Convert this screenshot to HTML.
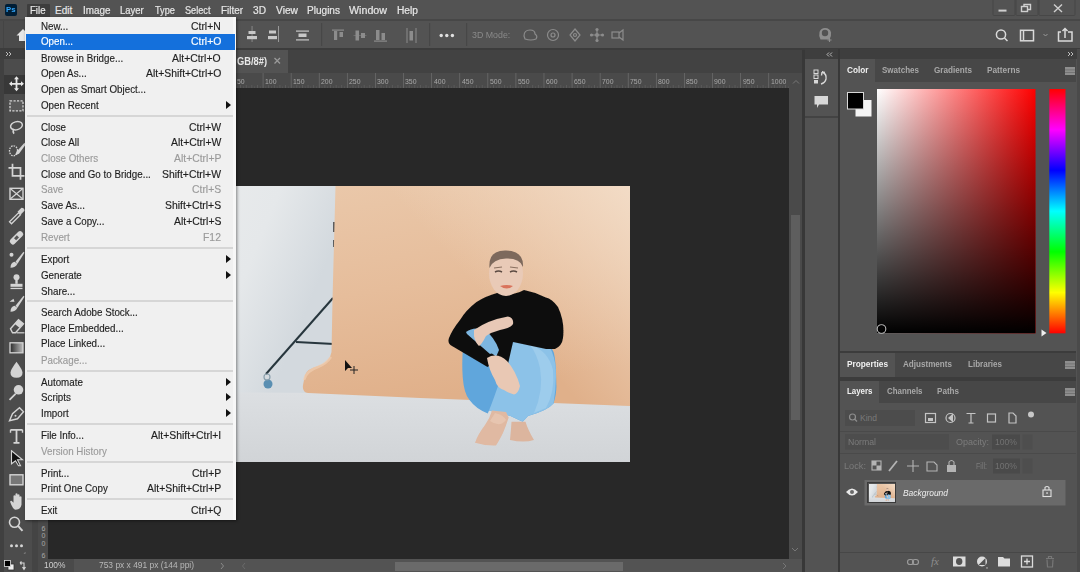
<!DOCTYPE html>
<html><head><meta charset="utf-8"><style>
html,body{margin:0;padding:0;}
body{width:1080px;height:572px;overflow:hidden;position:relative;background:#535353;font-family:"Liberation Sans", sans-serif;}
svg{position:absolute;overflow:visible;}
</style></head><body>
<div style="position:absolute;left:0px;top:0px;width:1080px;height:19px;background:#535353;"></div>
<div style="position:absolute;left:0px;top:19px;width:1080px;height:2px;background:#474747;"></div>
<div style="position:absolute;left:0px;top:21px;width:1080px;height:28px;background:#535353;"></div>
<div style="position:absolute;left:0px;top:48px;width:1080px;height:2px;background:#3c3c3c;"></div>
<div style="position:absolute;left:0px;top:50px;width:32px;height:9px;background:#3e3e3e;"></div>
<div style="position:absolute;left:0px;top:59px;width:32px;height:513px;background:#4c4c4c;"></div>
<div style="position:absolute;left:0px;top:59px;width:4px;height:513px;background:#404040;"></div>
<div style="position:absolute;left:32px;top:50px;width:6px;height:522px;background:#444444;"></div>
<div style="position:absolute;left:38px;top:50px;width:765px;height:23px;background:#424242;"></div>
<div style="position:absolute;left:38px;top:50px;width:250px;height:23px;background:#535353;"></div>
<div style="position:absolute;left:38px;top:73px;width:751px;height:15px;background:#4a4a4a;"></div>
<div style="position:absolute;left:38px;top:88px;width:10px;height:471px;background:#4a4a4a;"></div>
<div style="position:absolute;left:48px;top:88px;width:741px;height:471px;background:#282828;"></div>
<div style="position:absolute;left:789px;top:73px;width:13px;height:486px;background:#4a4a4a;"></div>
<div style="position:absolute;left:791px;top:215px;width:9px;height:205px;background:#5e5e5e;"></div>
<div style="position:absolute;left:38px;top:559px;width:765px;height:13px;background:#535353;"></div>
<div style="position:absolute;left:38px;top:559px;width:36px;height:13px;background:#4a4a4a;"></div>
<div style="position:absolute;left:395px;top:562px;width:228px;height:9px;background:#6a6a6a;"></div>
<div style="position:absolute;left:802px;top:50px;width:3px;height:522px;background:#383838;"></div>
<div style="position:absolute;left:805px;top:49px;width:33px;height:10px;background:#3e3e3e;"></div>
<div style="position:absolute;left:805px;top:59px;width:33px;height:513px;background:#535353;"></div>
<div style="position:absolute;left:805px;top:116px;width:33px;height:1.5px;background:#434343;"></div>
<div style="position:absolute;left:838px;top:49px;width:2px;height:523px;background:#383838;"></div>
<div style="position:absolute;left:840px;top:49px;width:240px;height:10px;background:#3e3e3e;"></div>
<div style="position:absolute;left:840px;top:59px;width:236px;height:23px;background:#474747;"></div>
<div style="position:absolute;left:840px;top:59px;width:35px;height:23px;background:#535353;"></div>
<div style="position:absolute;left:840px;top:82px;width:236px;height:269px;background:#535353;"></div>
<div style="position:absolute;left:840px;top:351px;width:236px;height:2px;background:#3c3c3c;"></div>
<div style="position:absolute;left:840px;top:353px;width:236px;height:24px;background:#474747;"></div>
<div style="position:absolute;left:840px;top:353px;width:55px;height:24px;background:#535353;"></div>
<div style="position:absolute;left:840px;top:377px;width:236px;height:4px;background:#3c3c3c;"></div>
<div style="position:absolute;left:840px;top:381px;width:236px;height:22px;background:#474747;"></div>
<div style="position:absolute;left:840px;top:381px;width:39px;height:22px;background:#535353;"></div>
<div style="position:absolute;left:840px;top:403px;width:236px;height:169px;background:#535353;"></div>
<div style="position:absolute;left:1077px;top:49px;width:3px;height:523px;background:#4a4a4a;"></div>
<svg style="left:0;top:0" width="1080" height="572" viewBox="0 0 1080 572"><rect x="206.50" y="73" width="0.8" height="15" fill="#6a6a6a"/><rect x="212.12" y="85" width="0.8" height="3" fill="#5e5e5e"/><rect x="217.74" y="85" width="0.8" height="3" fill="#5e5e5e"/><rect x="223.35" y="85" width="0.8" height="3" fill="#5e5e5e"/><rect x="228.97" y="85" width="0.8" height="3" fill="#5e5e5e"/><rect x="234.59" y="73" width="0.8" height="15" fill="#6a6a6a"/><rect x="240.21" y="85" width="0.8" height="3" fill="#5e5e5e"/><rect x="245.83" y="85" width="0.8" height="3" fill="#5e5e5e"/><rect x="251.44" y="85" width="0.8" height="3" fill="#5e5e5e"/><rect x="257.06" y="85" width="0.8" height="3" fill="#5e5e5e"/><rect x="262.68" y="73" width="0.8" height="15" fill="#6a6a6a"/><rect x="268.30" y="85" width="0.8" height="3" fill="#5e5e5e"/><rect x="273.92" y="85" width="0.8" height="3" fill="#5e5e5e"/><rect x="279.53" y="85" width="0.8" height="3" fill="#5e5e5e"/><rect x="285.15" y="85" width="0.8" height="3" fill="#5e5e5e"/><rect x="290.77" y="73" width="0.8" height="15" fill="#6a6a6a"/><rect x="296.39" y="85" width="0.8" height="3" fill="#5e5e5e"/><rect x="302.01" y="85" width="0.8" height="3" fill="#5e5e5e"/><rect x="307.62" y="85" width="0.8" height="3" fill="#5e5e5e"/><rect x="313.24" y="85" width="0.8" height="3" fill="#5e5e5e"/><rect x="318.86" y="73" width="0.8" height="15" fill="#6a6a6a"/><rect x="324.48" y="85" width="0.8" height="3" fill="#5e5e5e"/><rect x="330.10" y="85" width="0.8" height="3" fill="#5e5e5e"/><rect x="335.71" y="85" width="0.8" height="3" fill="#5e5e5e"/><rect x="341.33" y="85" width="0.8" height="3" fill="#5e5e5e"/><rect x="346.95" y="73" width="0.8" height="15" fill="#6a6a6a"/><rect x="352.57" y="85" width="0.8" height="3" fill="#5e5e5e"/><rect x="358.19" y="85" width="0.8" height="3" fill="#5e5e5e"/><rect x="363.80" y="85" width="0.8" height="3" fill="#5e5e5e"/><rect x="369.42" y="85" width="0.8" height="3" fill="#5e5e5e"/><rect x="375.04" y="73" width="0.8" height="15" fill="#6a6a6a"/><rect x="380.66" y="85" width="0.8" height="3" fill="#5e5e5e"/><rect x="386.28" y="85" width="0.8" height="3" fill="#5e5e5e"/><rect x="391.89" y="85" width="0.8" height="3" fill="#5e5e5e"/><rect x="397.51" y="85" width="0.8" height="3" fill="#5e5e5e"/><rect x="403.13" y="73" width="0.8" height="15" fill="#6a6a6a"/><rect x="408.75" y="85" width="0.8" height="3" fill="#5e5e5e"/><rect x="414.37" y="85" width="0.8" height="3" fill="#5e5e5e"/><rect x="419.98" y="85" width="0.8" height="3" fill="#5e5e5e"/><rect x="425.60" y="85" width="0.8" height="3" fill="#5e5e5e"/><rect x="431.22" y="73" width="0.8" height="15" fill="#6a6a6a"/><rect x="436.84" y="85" width="0.8" height="3" fill="#5e5e5e"/><rect x="442.46" y="85" width="0.8" height="3" fill="#5e5e5e"/><rect x="448.07" y="85" width="0.8" height="3" fill="#5e5e5e"/><rect x="453.69" y="85" width="0.8" height="3" fill="#5e5e5e"/><rect x="459.31" y="73" width="0.8" height="15" fill="#6a6a6a"/><rect x="464.93" y="85" width="0.8" height="3" fill="#5e5e5e"/><rect x="470.55" y="85" width="0.8" height="3" fill="#5e5e5e"/><rect x="476.16" y="85" width="0.8" height="3" fill="#5e5e5e"/><rect x="481.78" y="85" width="0.8" height="3" fill="#5e5e5e"/><rect x="487.40" y="73" width="0.8" height="15" fill="#6a6a6a"/><rect x="493.02" y="85" width="0.8" height="3" fill="#5e5e5e"/><rect x="498.64" y="85" width="0.8" height="3" fill="#5e5e5e"/><rect x="504.25" y="85" width="0.8" height="3" fill="#5e5e5e"/><rect x="509.87" y="85" width="0.8" height="3" fill="#5e5e5e"/><rect x="515.49" y="73" width="0.8" height="15" fill="#6a6a6a"/><rect x="521.11" y="85" width="0.8" height="3" fill="#5e5e5e"/><rect x="526.73" y="85" width="0.8" height="3" fill="#5e5e5e"/><rect x="532.34" y="85" width="0.8" height="3" fill="#5e5e5e"/><rect x="537.96" y="85" width="0.8" height="3" fill="#5e5e5e"/><rect x="543.58" y="73" width="0.8" height="15" fill="#6a6a6a"/><rect x="549.20" y="85" width="0.8" height="3" fill="#5e5e5e"/><rect x="554.82" y="85" width="0.8" height="3" fill="#5e5e5e"/><rect x="560.43" y="85" width="0.8" height="3" fill="#5e5e5e"/><rect x="566.05" y="85" width="0.8" height="3" fill="#5e5e5e"/><rect x="571.67" y="73" width="0.8" height="15" fill="#6a6a6a"/><rect x="577.29" y="85" width="0.8" height="3" fill="#5e5e5e"/><rect x="582.91" y="85" width="0.8" height="3" fill="#5e5e5e"/><rect x="588.52" y="85" width="0.8" height="3" fill="#5e5e5e"/><rect x="594.14" y="85" width="0.8" height="3" fill="#5e5e5e"/><rect x="599.76" y="73" width="0.8" height="15" fill="#6a6a6a"/><rect x="605.38" y="85" width="0.8" height="3" fill="#5e5e5e"/><rect x="611.00" y="85" width="0.8" height="3" fill="#5e5e5e"/><rect x="616.61" y="85" width="0.8" height="3" fill="#5e5e5e"/><rect x="622.23" y="85" width="0.8" height="3" fill="#5e5e5e"/><rect x="627.85" y="73" width="0.8" height="15" fill="#6a6a6a"/><rect x="633.47" y="85" width="0.8" height="3" fill="#5e5e5e"/><rect x="639.09" y="85" width="0.8" height="3" fill="#5e5e5e"/><rect x="644.70" y="85" width="0.8" height="3" fill="#5e5e5e"/><rect x="650.32" y="85" width="0.8" height="3" fill="#5e5e5e"/><rect x="655.94" y="73" width="0.8" height="15" fill="#6a6a6a"/><rect x="661.56" y="85" width="0.8" height="3" fill="#5e5e5e"/><rect x="667.18" y="85" width="0.8" height="3" fill="#5e5e5e"/><rect x="672.79" y="85" width="0.8" height="3" fill="#5e5e5e"/><rect x="678.41" y="85" width="0.8" height="3" fill="#5e5e5e"/><rect x="684.03" y="73" width="0.8" height="15" fill="#6a6a6a"/><rect x="689.65" y="85" width="0.8" height="3" fill="#5e5e5e"/><rect x="695.27" y="85" width="0.8" height="3" fill="#5e5e5e"/><rect x="700.88" y="85" width="0.8" height="3" fill="#5e5e5e"/><rect x="706.50" y="85" width="0.8" height="3" fill="#5e5e5e"/><rect x="712.12" y="73" width="0.8" height="15" fill="#6a6a6a"/><rect x="717.74" y="85" width="0.8" height="3" fill="#5e5e5e"/><rect x="723.36" y="85" width="0.8" height="3" fill="#5e5e5e"/><rect x="728.97" y="85" width="0.8" height="3" fill="#5e5e5e"/><rect x="734.59" y="85" width="0.8" height="3" fill="#5e5e5e"/><rect x="740.21" y="73" width="0.8" height="15" fill="#6a6a6a"/><rect x="745.83" y="85" width="0.8" height="3" fill="#5e5e5e"/><rect x="751.45" y="85" width="0.8" height="3" fill="#5e5e5e"/><rect x="757.06" y="85" width="0.8" height="3" fill="#5e5e5e"/><rect x="762.68" y="85" width="0.8" height="3" fill="#5e5e5e"/><rect x="768.30" y="73" width="0.8" height="15" fill="#6a6a6a"/><rect x="773.92" y="85" width="0.8" height="3" fill="#5e5e5e"/><rect x="779.54" y="85" width="0.8" height="3" fill="#5e5e5e"/><rect x="785.15" y="85" width="0.8" height="3" fill="#5e5e5e"/><rect x="52.00" y="86.3" width="0.7" height="1.7" fill="#5a5a5a"/><rect x="57.62" y="86.3" width="0.7" height="1.7" fill="#5a5a5a"/><rect x="63.24" y="86.3" width="0.7" height="1.7" fill="#5a5a5a"/><rect x="68.86" y="86.3" width="0.7" height="1.7" fill="#5a5a5a"/><rect x="74.48" y="86.3" width="0.7" height="1.7" fill="#5a5a5a"/><rect x="80.10" y="86.3" width="0.7" height="1.7" fill="#5a5a5a"/><rect x="85.71" y="86.3" width="0.7" height="1.7" fill="#5a5a5a"/><rect x="91.33" y="86.3" width="0.7" height="1.7" fill="#5a5a5a"/><rect x="96.95" y="86.3" width="0.7" height="1.7" fill="#5a5a5a"/><rect x="102.57" y="86.3" width="0.7" height="1.7" fill="#5a5a5a"/><rect x="108.19" y="86.3" width="0.7" height="1.7" fill="#5a5a5a"/><rect x="113.80" y="86.3" width="0.7" height="1.7" fill="#5a5a5a"/><rect x="119.42" y="86.3" width="0.7" height="1.7" fill="#5a5a5a"/><rect x="125.04" y="86.3" width="0.7" height="1.7" fill="#5a5a5a"/><rect x="130.66" y="86.3" width="0.7" height="1.7" fill="#5a5a5a"/><rect x="136.28" y="86.3" width="0.7" height="1.7" fill="#5a5a5a"/><rect x="141.89" y="86.3" width="0.7" height="1.7" fill="#5a5a5a"/><rect x="147.51" y="86.3" width="0.7" height="1.7" fill="#5a5a5a"/><rect x="153.13" y="86.3" width="0.7" height="1.7" fill="#5a5a5a"/><rect x="158.75" y="86.3" width="0.7" height="1.7" fill="#5a5a5a"/><rect x="164.37" y="86.3" width="0.7" height="1.7" fill="#5a5a5a"/><rect x="169.98" y="86.3" width="0.7" height="1.7" fill="#5a5a5a"/><rect x="175.60" y="86.3" width="0.7" height="1.7" fill="#5a5a5a"/><rect x="181.22" y="86.3" width="0.7" height="1.7" fill="#5a5a5a"/><rect x="186.84" y="86.3" width="0.7" height="1.7" fill="#5a5a5a"/><rect x="192.46" y="86.3" width="0.7" height="1.7" fill="#5a5a5a"/><rect x="198.07" y="86.3" width="0.7" height="1.7" fill="#5a5a5a"/><rect x="203.69" y="86.3" width="0.7" height="1.7" fill="#5a5a5a"/><rect x="209.31" y="86.3" width="0.7" height="1.7" fill="#5a5a5a"/><rect x="214.93" y="86.3" width="0.7" height="1.7" fill="#5a5a5a"/><rect x="220.54" y="86.3" width="0.7" height="1.7" fill="#5a5a5a"/><rect x="226.16" y="86.3" width="0.7" height="1.7" fill="#5a5a5a"/><rect x="231.78" y="86.3" width="0.7" height="1.7" fill="#5a5a5a"/><rect x="237.40" y="86.3" width="0.7" height="1.7" fill="#5a5a5a"/><rect x="243.02" y="86.3" width="0.7" height="1.7" fill="#5a5a5a"/><rect x="248.63" y="86.3" width="0.7" height="1.7" fill="#5a5a5a"/><rect x="254.25" y="86.3" width="0.7" height="1.7" fill="#5a5a5a"/><rect x="259.87" y="86.3" width="0.7" height="1.7" fill="#5a5a5a"/><rect x="265.49" y="86.3" width="0.7" height="1.7" fill="#5a5a5a"/><rect x="271.11" y="86.3" width="0.7" height="1.7" fill="#5a5a5a"/><rect x="276.73" y="86.3" width="0.7" height="1.7" fill="#5a5a5a"/><rect x="282.34" y="86.3" width="0.7" height="1.7" fill="#5a5a5a"/><rect x="287.96" y="86.3" width="0.7" height="1.7" fill="#5a5a5a"/><rect x="293.58" y="86.3" width="0.7" height="1.7" fill="#5a5a5a"/><rect x="299.20" y="86.3" width="0.7" height="1.7" fill="#5a5a5a"/><rect x="304.81" y="86.3" width="0.7" height="1.7" fill="#5a5a5a"/><rect x="310.43" y="86.3" width="0.7" height="1.7" fill="#5a5a5a"/><rect x="316.05" y="86.3" width="0.7" height="1.7" fill="#5a5a5a"/><rect x="321.67" y="86.3" width="0.7" height="1.7" fill="#5a5a5a"/><rect x="327.29" y="86.3" width="0.7" height="1.7" fill="#5a5a5a"/><rect x="332.90" y="86.3" width="0.7" height="1.7" fill="#5a5a5a"/><rect x="338.52" y="86.3" width="0.7" height="1.7" fill="#5a5a5a"/><rect x="344.14" y="86.3" width="0.7" height="1.7" fill="#5a5a5a"/><rect x="349.76" y="86.3" width="0.7" height="1.7" fill="#5a5a5a"/><rect x="355.38" y="86.3" width="0.7" height="1.7" fill="#5a5a5a"/><rect x="361.00" y="86.3" width="0.7" height="1.7" fill="#5a5a5a"/><rect x="366.61" y="86.3" width="0.7" height="1.7" fill="#5a5a5a"/><rect x="372.23" y="86.3" width="0.7" height="1.7" fill="#5a5a5a"/><rect x="377.85" y="86.3" width="0.7" height="1.7" fill="#5a5a5a"/><rect x="383.47" y="86.3" width="0.7" height="1.7" fill="#5a5a5a"/><rect x="389.08" y="86.3" width="0.7" height="1.7" fill="#5a5a5a"/><rect x="394.70" y="86.3" width="0.7" height="1.7" fill="#5a5a5a"/><rect x="400.32" y="86.3" width="0.7" height="1.7" fill="#5a5a5a"/><rect x="405.94" y="86.3" width="0.7" height="1.7" fill="#5a5a5a"/><rect x="411.56" y="86.3" width="0.7" height="1.7" fill="#5a5a5a"/><rect x="417.17" y="86.3" width="0.7" height="1.7" fill="#5a5a5a"/><rect x="422.79" y="86.3" width="0.7" height="1.7" fill="#5a5a5a"/><rect x="428.41" y="86.3" width="0.7" height="1.7" fill="#5a5a5a"/><rect x="434.03" y="86.3" width="0.7" height="1.7" fill="#5a5a5a"/><rect x="439.65" y="86.3" width="0.7" height="1.7" fill="#5a5a5a"/><rect x="445.26" y="86.3" width="0.7" height="1.7" fill="#5a5a5a"/><rect x="450.88" y="86.3" width="0.7" height="1.7" fill="#5a5a5a"/><rect x="456.50" y="86.3" width="0.7" height="1.7" fill="#5a5a5a"/><rect x="462.12" y="86.3" width="0.7" height="1.7" fill="#5a5a5a"/><rect x="467.74" y="86.3" width="0.7" height="1.7" fill="#5a5a5a"/><rect x="473.35" y="86.3" width="0.7" height="1.7" fill="#5a5a5a"/><rect x="478.97" y="86.3" width="0.7" height="1.7" fill="#5a5a5a"/><rect x="484.59" y="86.3" width="0.7" height="1.7" fill="#5a5a5a"/><rect x="490.21" y="86.3" width="0.7" height="1.7" fill="#5a5a5a"/><rect x="495.83" y="86.3" width="0.7" height="1.7" fill="#5a5a5a"/><rect x="501.44" y="86.3" width="0.7" height="1.7" fill="#5a5a5a"/><rect x="507.06" y="86.3" width="0.7" height="1.7" fill="#5a5a5a"/><rect x="512.68" y="86.3" width="0.7" height="1.7" fill="#5a5a5a"/><rect x="518.30" y="86.3" width="0.7" height="1.7" fill="#5a5a5a"/><rect x="523.92" y="86.3" width="0.7" height="1.7" fill="#5a5a5a"/><rect x="529.53" y="86.3" width="0.7" height="1.7" fill="#5a5a5a"/><rect x="535.15" y="86.3" width="0.7" height="1.7" fill="#5a5a5a"/><rect x="540.77" y="86.3" width="0.7" height="1.7" fill="#5a5a5a"/><rect x="546.39" y="86.3" width="0.7" height="1.7" fill="#5a5a5a"/><rect x="552.01" y="86.3" width="0.7" height="1.7" fill="#5a5a5a"/><rect x="557.62" y="86.3" width="0.7" height="1.7" fill="#5a5a5a"/><rect x="563.24" y="86.3" width="0.7" height="1.7" fill="#5a5a5a"/><rect x="568.86" y="86.3" width="0.7" height="1.7" fill="#5a5a5a"/><rect x="574.48" y="86.3" width="0.7" height="1.7" fill="#5a5a5a"/><rect x="580.10" y="86.3" width="0.7" height="1.7" fill="#5a5a5a"/><rect x="585.71" y="86.3" width="0.7" height="1.7" fill="#5a5a5a"/><rect x="591.33" y="86.3" width="0.7" height="1.7" fill="#5a5a5a"/><rect x="596.95" y="86.3" width="0.7" height="1.7" fill="#5a5a5a"/><rect x="602.57" y="86.3" width="0.7" height="1.7" fill="#5a5a5a"/><rect x="608.19" y="86.3" width="0.7" height="1.7" fill="#5a5a5a"/><rect x="613.80" y="86.3" width="0.7" height="1.7" fill="#5a5a5a"/><rect x="619.42" y="86.3" width="0.7" height="1.7" fill="#5a5a5a"/><rect x="625.04" y="86.3" width="0.7" height="1.7" fill="#5a5a5a"/><rect x="630.66" y="86.3" width="0.7" height="1.7" fill="#5a5a5a"/><rect x="636.28" y="86.3" width="0.7" height="1.7" fill="#5a5a5a"/><rect x="641.89" y="86.3" width="0.7" height="1.7" fill="#5a5a5a"/><rect x="647.51" y="86.3" width="0.7" height="1.7" fill="#5a5a5a"/><rect x="653.13" y="86.3" width="0.7" height="1.7" fill="#5a5a5a"/><rect x="658.75" y="86.3" width="0.7" height="1.7" fill="#5a5a5a"/><rect x="664.37" y="86.3" width="0.7" height="1.7" fill="#5a5a5a"/><rect x="669.98" y="86.3" width="0.7" height="1.7" fill="#5a5a5a"/><rect x="675.60" y="86.3" width="0.7" height="1.7" fill="#5a5a5a"/><rect x="681.22" y="86.3" width="0.7" height="1.7" fill="#5a5a5a"/><rect x="686.84" y="86.3" width="0.7" height="1.7" fill="#5a5a5a"/><rect x="692.46" y="86.3" width="0.7" height="1.7" fill="#5a5a5a"/><rect x="698.08" y="86.3" width="0.7" height="1.7" fill="#5a5a5a"/><rect x="703.69" y="86.3" width="0.7" height="1.7" fill="#5a5a5a"/><rect x="709.31" y="86.3" width="0.7" height="1.7" fill="#5a5a5a"/><rect x="714.93" y="86.3" width="0.7" height="1.7" fill="#5a5a5a"/><rect x="720.55" y="86.3" width="0.7" height="1.7" fill="#5a5a5a"/><rect x="726.16" y="86.3" width="0.7" height="1.7" fill="#5a5a5a"/><rect x="731.78" y="86.3" width="0.7" height="1.7" fill="#5a5a5a"/><rect x="737.40" y="86.3" width="0.7" height="1.7" fill="#5a5a5a"/><rect x="743.02" y="86.3" width="0.7" height="1.7" fill="#5a5a5a"/><rect x="748.64" y="86.3" width="0.7" height="1.7" fill="#5a5a5a"/><rect x="754.25" y="86.3" width="0.7" height="1.7" fill="#5a5a5a"/><rect x="759.87" y="86.3" width="0.7" height="1.7" fill="#5a5a5a"/><rect x="765.49" y="86.3" width="0.7" height="1.7" fill="#5a5a5a"/><rect x="771.11" y="86.3" width="0.7" height="1.7" fill="#5a5a5a"/><rect x="776.73" y="86.3" width="0.7" height="1.7" fill="#5a5a5a"/><rect x="782.34" y="86.3" width="0.7" height="1.7" fill="#5a5a5a"/><rect x="787.96" y="86.3" width="0.7" height="1.7" fill="#5a5a5a"/></svg>
<div style="position:absolute;left:236.89px;top:75.90px;height:11.2px;line-height:11.2px;font-size:8px;color:#a9a9a9;font-weight:normal;font-style:normal;white-space:pre;transform:scaleX(0.8600);transform-origin:0 0;">50</div>
<div style="position:absolute;left:264.98px;top:75.90px;height:11.2px;line-height:11.2px;font-size:8px;color:#a9a9a9;font-weight:normal;font-style:normal;white-space:pre;transform:scaleX(0.8600);transform-origin:0 0;">100</div>
<div style="position:absolute;left:293.07px;top:75.90px;height:11.2px;line-height:11.2px;font-size:8px;color:#a9a9a9;font-weight:normal;font-style:normal;white-space:pre;transform:scaleX(0.8600);transform-origin:0 0;">150</div>
<div style="position:absolute;left:321.16px;top:75.90px;height:11.2px;line-height:11.2px;font-size:8px;color:#a9a9a9;font-weight:normal;font-style:normal;white-space:pre;transform:scaleX(0.8600);transform-origin:0 0;">200</div>
<div style="position:absolute;left:349.25px;top:75.90px;height:11.2px;line-height:11.2px;font-size:8px;color:#a9a9a9;font-weight:normal;font-style:normal;white-space:pre;transform:scaleX(0.8600);transform-origin:0 0;">250</div>
<div style="position:absolute;left:377.34px;top:75.90px;height:11.2px;line-height:11.2px;font-size:8px;color:#a9a9a9;font-weight:normal;font-style:normal;white-space:pre;transform:scaleX(0.8600);transform-origin:0 0;">300</div>
<div style="position:absolute;left:405.43px;top:75.90px;height:11.2px;line-height:11.2px;font-size:8px;color:#a9a9a9;font-weight:normal;font-style:normal;white-space:pre;transform:scaleX(0.8600);transform-origin:0 0;">350</div>
<div style="position:absolute;left:433.52px;top:75.90px;height:11.2px;line-height:11.2px;font-size:8px;color:#a9a9a9;font-weight:normal;font-style:normal;white-space:pre;transform:scaleX(0.8600);transform-origin:0 0;">400</div>
<div style="position:absolute;left:461.61px;top:75.90px;height:11.2px;line-height:11.2px;font-size:8px;color:#a9a9a9;font-weight:normal;font-style:normal;white-space:pre;transform:scaleX(0.8600);transform-origin:0 0;">450</div>
<div style="position:absolute;left:489.70px;top:75.90px;height:11.2px;line-height:11.2px;font-size:8px;color:#a9a9a9;font-weight:normal;font-style:normal;white-space:pre;transform:scaleX(0.8600);transform-origin:0 0;">500</div>
<div style="position:absolute;left:517.79px;top:75.90px;height:11.2px;line-height:11.2px;font-size:8px;color:#a9a9a9;font-weight:normal;font-style:normal;white-space:pre;transform:scaleX(0.8600);transform-origin:0 0;">550</div>
<div style="position:absolute;left:545.88px;top:75.90px;height:11.2px;line-height:11.2px;font-size:8px;color:#a9a9a9;font-weight:normal;font-style:normal;white-space:pre;transform:scaleX(0.8600);transform-origin:0 0;">600</div>
<div style="position:absolute;left:573.97px;top:75.90px;height:11.2px;line-height:11.2px;font-size:8px;color:#a9a9a9;font-weight:normal;font-style:normal;white-space:pre;transform:scaleX(0.8600);transform-origin:0 0;">650</div>
<div style="position:absolute;left:602.06px;top:75.90px;height:11.2px;line-height:11.2px;font-size:8px;color:#a9a9a9;font-weight:normal;font-style:normal;white-space:pre;transform:scaleX(0.8600);transform-origin:0 0;">700</div>
<div style="position:absolute;left:630.15px;top:75.90px;height:11.2px;line-height:11.2px;font-size:8px;color:#a9a9a9;font-weight:normal;font-style:normal;white-space:pre;transform:scaleX(0.8600);transform-origin:0 0;">750</div>
<div style="position:absolute;left:658.24px;top:75.90px;height:11.2px;line-height:11.2px;font-size:8px;color:#a9a9a9;font-weight:normal;font-style:normal;white-space:pre;transform:scaleX(0.8600);transform-origin:0 0;">800</div>
<div style="position:absolute;left:686.33px;top:75.90px;height:11.2px;line-height:11.2px;font-size:8px;color:#a9a9a9;font-weight:normal;font-style:normal;white-space:pre;transform:scaleX(0.8600);transform-origin:0 0;">850</div>
<div style="position:absolute;left:714.42px;top:75.90px;height:11.2px;line-height:11.2px;font-size:8px;color:#a9a9a9;font-weight:normal;font-style:normal;white-space:pre;transform:scaleX(0.8600);transform-origin:0 0;">900</div>
<div style="position:absolute;left:742.51px;top:75.90px;height:11.2px;line-height:11.2px;font-size:8px;color:#a9a9a9;font-weight:normal;font-style:normal;white-space:pre;transform:scaleX(0.8600);transform-origin:0 0;">950</div>
<div style="position:absolute;left:770.60px;top:75.90px;height:11.2px;line-height:11.2px;font-size:8px;color:#a9a9a9;font-weight:normal;font-style:normal;white-space:pre;transform:scaleX(0.8600);transform-origin:0 0;">1000</div>
<div style="position:absolute;left:41.50px;top:523.60px;height:9.8px;line-height:9.8px;font-size:7px;color:#a8a8a8;font-weight:normal;font-style:normal;white-space:pre;">6</div>
<div style="position:absolute;left:41.50px;top:531.10px;height:9.8px;line-height:9.8px;font-size:7px;color:#a8a8a8;font-weight:normal;font-style:normal;white-space:pre;">0</div>
<div style="position:absolute;left:41.50px;top:538.60px;height:9.8px;line-height:9.8px;font-size:7px;color:#a8a8a8;font-weight:normal;font-style:normal;white-space:pre;">0</div>
<div style="position:absolute;left:41.50px;top:551.10px;height:9.8px;line-height:9.8px;font-size:7px;color:#a8a8a8;font-weight:normal;font-style:normal;white-space:pre;">6</div>
<div style="position:absolute;left:236.50px;top:55.00px;height:14.0px;line-height:14.0px;font-size:10px;color:#e8e8e8;font-weight:bold;font-style:normal;white-space:pre;transform:scaleX(0.9307);transform-origin:0 0;">GB/8#)</div>
<svg style="left:0;top:0" width="1080" height="100"><path d="M274.5 58 L280 63.5 M280 58 L274.5 63.5" stroke="#9a9a9a" stroke-width="1.3"/></svg>
<div style="position:absolute;left:43.80px;top:560.05px;height:11.9px;line-height:11.9px;font-size:8.5px;color:#cfcfcf;font-weight:normal;font-style:normal;white-space:pre;transform:scaleX(0.9885);transform-origin:0 0;">100%</div>
<div style="position:absolute;left:99.00px;top:560.05px;height:11.9px;line-height:11.9px;font-size:8.5px;color:#b8b8b8;font-weight:normal;font-style:normal;white-space:pre;transform:scaleX(0.9902);transform-origin:0 0;">753 px x 491 px (144 ppi)</div>
<svg style="left:0;top:0" width="1080" height="572"><path d="M221 563 L223.5 566 L221 569" stroke="#8a8a8a" stroke-width="1" fill="none"/><path d="M245 563 L242.5 566 L245 569" stroke="#6a6a6a" stroke-width="1" fill="none"/><path d="M792 548 L795 551 L798 548" stroke="#777" stroke-width="1" fill="none"/><path d="M793 83.5 L796 80.5 L799 83.5" stroke="#777" stroke-width="1" fill="none"/><path d="M783 563 L786 566 L783 569" stroke="#777" stroke-width="1" fill="none"/></svg>

<svg style="left:206px;top:186px" width="424" height="276" viewBox="206 186 424 276">
<defs>
 <linearGradient id="wall" gradientUnits="userSpaceOnUse" x1="206" y1="186" x2="336" y2="240">
  <stop offset="0" stop-color="#e9ebec"/><stop offset="0.5" stop-color="#e5e8ea"/><stop offset="1" stop-color="#d3d9de"/>
 </linearGradient>
 <linearGradient id="floor" x1="0" y1="0" x2="0" y2="1">
  <stop offset="0" stop-color="#dcdfe2"/><stop offset="1" stop-color="#d1d4d7"/>
 </linearGradient>
 <linearGradient id="paper" x1="0" y1="0" x2="0.25" y2="1">
  <stop offset="0" stop-color="#eac8aa"/><stop offset="0.5" stop-color="#e6bd9b"/><stop offset="1" stop-color="#e0b08a"/>
 </linearGradient>
 <linearGradient id="paperTR" x1="0" y1="0.6" x2="1" y2="0">
  <stop offset="0.45" stop-color="#f2dac4" stop-opacity="0"/><stop offset="1" stop-color="#f3ddc8" stop-opacity="0.95"/>
 </linearGradient>
 <linearGradient id="jeans" x1="0" y1="0" x2="1" y2="1">
  <stop offset="0" stop-color="#6caee2"/><stop offset="0.55" stop-color="#88c2ea"/><stop offset="1" stop-color="#64a6dc"/>
 </linearGradient>
 <filter id="bl" x="-10%" y="-10%" width="120%" height="120%"><feGaussianBlur stdDeviation="0.5"/></filter>
</defs>
<rect x="206" y="186" width="424" height="276" fill="url(#wall)"/>
<path d="M206 392 L320 393 L630 404 L630 462 L206 462 Z" fill="url(#floor)"/>
<!-- stand -->
<g stroke="#27363d" stroke-width="2" fill="none">
 <path d="M266 374 L333 298"/>
 <path d="M296 342 L334 344"/>
</g>
<path d="M334 222 L334 232 M334 240 L334 247" stroke="#333" stroke-width="1.5"/>
<circle cx="268" cy="384" r="4.5" fill="#5a8fb2"/>
<circle cx="267" cy="377" r="3" fill="none" stroke="#8aa0ad" stroke-width="1.2"/>
<!-- backdrop paper -->
<path d="M335.5 186 L630 186 L630 406 L420 398 L308 393 Q302 392 303 385 L305 375 Q307 369 318 366 Q330 362 331.5 352 L332.5 300 Z" fill="url(#paper)"/>
<path d="M335.5 186 L630 186 L630 406 L420 398 L308 393 Q302 392 303 385 L305 375 Q307 369 318 366 Q330 362 331.5 352 L332.5 300 Z" fill="url(#paperTR)"/>
<path d="M304 380 Q306 371 318 367 Q326 364 331 357" stroke="#efcdb0" stroke-width="2.5" fill="none" opacity="0.7"/>
<!-- woman -->
<g filter="url(#bl)">
 <!-- jeans -->
 <path d="M466 331 Q461 350 462.7 377 Q464 394 469.5 400 Q476 409 487.8 413.4 L489 410.6 L510.5 416 L522.7 421.7 L528 416 Q547 411 553.5 403.6 Q557 392 556.3 384 Q556 360 553.6 352 Q551 346 546.8 343 Q530 336 515 338.6 L497 335 Z" fill="#60a6dc"/>
 <path d="M515 338.6 Q532 337 546.8 343 Q553 350 555.5 365 Q557 385 553.5 403.6 Q547 411 528 416 L522.7 421.7 L510.5 416 L489 410.6 Q494 398 500 380 Q506 360 515 338.6 Z" fill="#8cc2e8"/>
 <path d="M530 345 Q548 350 553 370 Q555 392 546 408 L534 413 Q544 390 540 368 Q537 354 530 345 Z" fill="#a9d2ef" opacity="0.6"/>
 <!-- sweater -->
 <path d="M497 293 Q486 296 476.5 302 Q466 310 460 320 Q452 330 449 338 Q447 343 452 346 L487.5 367 Q494 364 494 356 L498 356 L508 364 L513 342 L546 349 L555 349 Q562 346 563 338 Q565 322 558 307 Q552 299 545.8 297.6 Q535 292 524 290 Q511 297 497 293 Z" fill="#111"/>
 <!-- left knee between arm and torso -->
 <path d="M466 332 Q474 326 484 330 Q494 336 499 350 L496 357 Q492 352 490 354 L467 334 Z" fill="#7db6e0"/>
 <!-- hand on arm -->
 <path d="M474 330 Q488 320 508 316.5 Q514 318 513 324 Q511 328 500 330 Q492 332 486 336 Q482 344 479 346 Q475 342 474 336 Z" fill="#e8c8b6"/>
 <!-- hand on knee -->
 <path d="M487 358 Q497 352 507 361 Q516 371 520 386 Q518 394 514 394.5 Q508 393 504 390 Q497 388 495 380 Q489 370 487 358 Z" fill="#e9c8b4"/>
 <!-- head -->
 <ellipse cx="506" cy="273.5" rx="17" ry="22.5" fill="#e9cab7"/>
 <path d="M489.5 268 Q488 250 506 250.5 Q524 251 523 267 Q520 258 506 258.5 Q493 259 489.5 268 Z" fill="#7d695c"/>
 <path d="M500 286 Q507 284 513 286 Q507 291 500 286 Z" fill="#d9735c"/>
 <path d="M495 272 Q498.5 270 502 272 M510 272 Q513.5 270 517 272" stroke="#5a4a42" stroke-width="1.5" fill="none"/><path d="M494 268 L502 267 M510 267 L518 268" stroke="#8a7060" stroke-width="1.2"/>
 <!-- feet -->
 <path d="M492 410.6 L506 412 L508.7 417.6 Q506 426 503 433 Q499 441 496 445.5 Q486 446 475 442.7 Q478 434 485 425 Q490 418 492 410.6 Z" fill="#e0b9a2"/>
 <path d="M511.5 421.7 L525.5 421.7 Q528 430 534 440 Q524 443 510 440 Q511 430 511.5 421.7 Z" fill="#dcb59e"/>
 <path d="M495 413 Q504 415 506 420 Q500 428 490 421 Z" fill="#ebcdb9" opacity="0.6"/>
</g>
<!-- cursor -->
<path d="M345 360 L345 371 L348 368 L352 368 Z" fill="#111"/>
<path d="M354 366 L354 374 M350 370 L358 370" stroke="#222" stroke-width="1"/>
</svg>

<svg style="left:0;top:0" width="1080" height="572" viewBox="0 0 1080 572"><g fill="none" stroke="#bdbdbd" stroke-width="1"><path d="M829 52.5 L827 54.5 L829 56.5 M832 52.5 L830 54.5 L832 56.5"/><path d="M1068 52 L1070 54 L1068 56 M1071 52 L1073 54 L1071 56"/><path d="M6 52 L8 54 L6 56 M9 52 L11 54 L9 56"/></g><g fill="#d8d8d8"><rect x="814" y="70" width="4" height="3.5" fill="none" stroke="#d8d8d8" stroke-width="1"/><rect x="814" y="75" width="4" height="3.5" fill="none" stroke="#d8d8d8" stroke-width="1"/><rect x="814" y="80" width="4" height="3.5"/></g><path d="M822 72 Q827 74 826 79 Q825 83 821 84 M822 72 L821.5 75.5 M822 72 L825 72.5" fill="none" stroke="#d8d8d8" stroke-width="1.4"/><path d="M814.5 96 L828 96 L828 104.5 L819 104.5 L817 108 L817 104.5 L814.5 104.5 Z" fill="#d8d8d8"/><rect x="855.5" y="100" width="16" height="16.5" fill="#f4f4f4"/><rect x="847.5" y="92.5" width="16" height="16.5" fill="#000" stroke="#d8d8d8" stroke-width="1"/><defs><linearGradient id="sat" x1="0" x2="1"><stop offset="0" stop-color="#fff"/><stop offset="1" stop-color="#f00"/></linearGradient><linearGradient id="val" x1="0" y1="0" x2="0" y2="1"><stop offset="0" stop-color="#000" stop-opacity="0"/><stop offset="1" stop-color="#000"/></linearGradient><linearGradient id="hue" x1="0" y1="1" x2="0" y2="0"><stop offset="0" stop-color="#f00"/><stop offset="0.1667" stop-color="#ff0"/><stop offset="0.3333" stop-color="#0f0"/><stop offset="0.5" stop-color="#0ff"/><stop offset="0.6667" stop-color="#00f"/><stop offset="0.8333" stop-color="#f0f"/><stop offset="1" stop-color="#f00"/></linearGradient></defs><rect x="877" y="89" width="158.5" height="244.3" fill="url(#sat)"/><rect x="877" y="89" width="158.5" height="244.3" fill="url(#val)"/><rect x="1049.3" y="89" width="16.2" height="244.3" fill="url(#hue)"/><circle cx="881.5" cy="329" r="4.3" fill="none" stroke="#bbb" stroke-width="1.1"/><circle cx="881.5" cy="329" r="3.2" fill="none" stroke="#000" stroke-width="0.8"/><path d="M1041.5 329.5 L1041.5 336.5 L1046.5 333 Z" fill="#f0f0f0"/><rect x="1065" y="67" width="10" height="8" fill="#8e8e8e"/><g fill="#6e6e6e"><rect x="1065" y="69.5" width="10" height="0.8"/><rect x="1065" y="72.2" width="10" height="0.8"/></g><rect x="1065" y="361" width="10" height="8" fill="#8e8e8e"/><g fill="#6e6e6e"><rect x="1065" y="363.5" width="10" height="0.8"/><rect x="1065" y="366.2" width="10" height="0.8"/></g><rect x="1065" y="388" width="10" height="8" fill="#8e8e8e"/><g fill="#6e6e6e"><rect x="1065" y="390.5" width="10" height="0.8"/><rect x="1065" y="393.2" width="10" height="0.8"/></g><rect x="845" y="410" width="70" height="16" fill="#4c4c4c"/><g fill="none" stroke="#8e8e8e" stroke-width="1.2"><circle cx="852.5" cy="417" r="3"/><path d="M854.5 419 L857 421.5"/></g><g fill="none" stroke="#c4c4c4" stroke-width="1.2"><rect x="925.5" y="413.5" width="10" height="9"/><circle cx="950.5" cy="418" r="4.5"/><path d="M966.5 413.5 L975.5 413.5 M971 413.5 L971 423 M968.5 423 L973.5 423"/><rect x="987.5" y="414" width="8" height="8"/><path d="M1009 413 L1013 413 L1016 416 L1016 423 L1009 423 Z"/></g><circle cx="1031" cy="414.5" r="3" fill="#c8c8c8"/><path d="M948 418 L953 413.5 L953 422.5 Z" fill="#c4c4c4"/><rect x="928" y="418" width="5" height="3" fill="#c4c4c4"/><rect x="840" y="431" width="236" height="1" fill="#4a4a4a"/><rect x="840" y="453" width="236" height="1" fill="#4a4a4a"/><rect x="845" y="434" width="104" height="15.5" fill="#4d4d4d"/><rect x="992" y="434.5" width="28" height="15" fill="#4a4a4a"/><rect x="1022.5" y="434.5" width="10" height="15" fill="#4e4e4e"/><rect x="993" y="458.5" width="27" height="15" fill="#4a4a4a"/><rect x="1022.5" y="458.5" width="10" height="15" fill="#4e4e4e"/><g fill="none" stroke="#b4b4b4" stroke-width="1.1"><rect x="872" y="461" width="9" height="9"/><path d="M889 471 L897 461" stroke-width="1.8"/><path d="M913 460 L913 472 M907 466 L919 466"/><path d="M927 462 L934 462 L937 465 L937 471 L927 471 Z"/><path d="M949 465 L949 462 Q951.5 459 954 462 L954 465"/></g><rect x="947" y="465" width="9" height="7" fill="#b4b4b4"/><g fill="#b4b4b4"><rect x="872" y="461" width="4.5" height="4.5"/><rect x="876.5" y="465.5" width="4.5" height="4.5"/></g><rect x="864.5" y="480" width="201" height="25.5" fill="#6a6a6a"/><path d="M846 492 Q852 485 858 492 Q852 499 846 492 Z" fill="#e8e8e8"/><circle cx="852" cy="492" r="2" fill="#6a6a6a"/><rect x="867.5" y="482.5" width="28" height="20" fill="#555" stroke="#3a3a3a" stroke-width="1"/><g fill="none" stroke="#e0e0e0" stroke-width="1.1"><rect x="1043" y="490" width="8" height="6.5"/><path d="M1045 490 L1045 487.5 Q1047 485.5 1049 487.5 L1049 490"/></g><rect x="1046.3" y="492.3" width="1.5" height="1.5" fill="#e0e0e0"/><rect x="840" y="552" width="236" height="1" fill="#474747"/><g fill="none" stroke="#9a9a9a" stroke-width="1.2"><rect x="907.5" y="559.5" width="6" height="5" rx="2.5"/><rect x="912.5" y="559.5" width="6" height="5" rx="2.5"/></g><g fill="#dcdcdc"><rect x="953" y="556.5" width="12.5" height="10"/></g><ellipse cx="959.2" cy="561.5" rx="3.2" ry="3.4" fill="#535353"/><circle cx="982" cy="561.5" r="5" fill="#dcdcdc"/><path d="M978.5 565 L985.5 558 L985.5 565 Z" fill="#535353"/><path d="M986 567.5 L988 567.5 L987 569 Z" fill="#ccc"/><path d="M998 557 L1003 557 L1004.5 558.5 L1010 558.5 L1010 566.5 L998 566.5 Z" fill="#dcdcdc"/><rect x="1021.5" y="556" width="11" height="11" fill="none" stroke="#dcdcdc" stroke-width="1.3"/><path d="M1027 558.5 L1027 564.5 M1024 561.5 L1030 561.5" stroke="#dcdcdc" stroke-width="1.3"/><path d="M1046 558.5 L1054 558.5 M1048.5 558.5 L1048.5 556.5 L1051.5 556.5 L1051.5 558.5 M1047 559.5 L1047.5 567 L1052.5 567 L1053 559.5" fill="none" stroke="#777" stroke-width="1.2"/></svg>
<svg style="left:868.5px;top:483.5px" width="26" height="18" viewBox="206 186 424 276" preserveAspectRatio="none">
<rect x="206" y="186" width="424" height="276" fill="url(#wall)"/>
<path d="M206 392 L320 393 L630 404 L630 462 L206 462 Z" fill="url(#floor)"/>
<!-- stand -->
<g stroke="#27363d" stroke-width="2" fill="none">
 <path d="M266 374 L333 298"/>
 <path d="M296 342 L334 344"/>
</g>
<path d="M334 222 L334 232 M334 240 L334 247" stroke="#333" stroke-width="1.5"/>
<circle cx="268" cy="384" r="4.5" fill="#5a8fb2"/>
<circle cx="267" cy="377" r="3" fill="none" stroke="#8aa0ad" stroke-width="1.2"/>
<!-- backdrop paper -->
<path d="M335.5 186 L630 186 L630 406 L420 398 L308 393 Q302 392 303 385 L305 375 Q307 369 318 366 Q330 362 331.5 352 L332.5 300 Z" fill="url(#paper)"/>
<path d="M335.5 186 L630 186 L630 406 L420 398 L308 393 Q302 392 303 385 L305 375 Q307 369 318 366 Q330 362 331.5 352 L332.5 300 Z" fill="url(#paperTR)"/>
<path d="M304 380 Q306 371 318 367 Q326 364 331 357" stroke="#efcdb0" stroke-width="2.5" fill="none" opacity="0.7"/>
<!-- woman -->
<g >
 <!-- jeans -->
 <path d="M466 331 Q461 350 462.7 377 Q464 394 469.5 400 Q476 409 487.8 413.4 L489 410.6 L510.5 416 L522.7 421.7 L528 416 Q547 411 553.5 403.6 Q557 392 556.3 384 Q556 360 553.6 352 Q551 346 546.8 343 Q530 336 515 338.6 L497 335 Z" fill="#60a6dc"/>
 <path d="M515 338.6 Q532 337 546.8 343 Q553 350 555.5 365 Q557 385 553.5 403.6 Q547 411 528 416 L522.7 421.7 L510.5 416 L489 410.6 Q494 398 500 380 Q506 360 515 338.6 Z" fill="#8cc2e8"/>
 <path d="M530 345 Q548 350 553 370 Q555 392 546 408 L534 413 Q544 390 540 368 Q537 354 530 345 Z" fill="#a9d2ef" opacity="0.6"/>
 <!-- sweater -->
 <path d="M497 293 Q486 296 476.5 302 Q466 310 460 320 Q452 330 449 338 Q447 343 452 346 L487.5 367 Q494 364 494 356 L498 356 L508 364 L513 342 L546 349 L555 349 Q562 346 563 338 Q565 322 558 307 Q552 299 545.8 297.6 Q535 292 524 290 Q511 297 497 293 Z" fill="#111"/>
 <!-- left knee between arm and torso -->
 <path d="M466 332 Q474 326 484 330 Q494 336 499 350 L496 357 Q492 352 490 354 L467 334 Z" fill="#7db6e0"/>
 <!-- hand on arm -->
 <path d="M474 330 Q488 320 508 316.5 Q514 318 513 324 Q511 328 500 330 Q492 332 486 336 Q482 344 479 346 Q475 342 474 336 Z" fill="#e8c8b6"/>
 <!-- hand on knee -->
 <path d="M487 358 Q497 352 507 361 Q516 371 520 386 Q518 394 514 394.5 Q508 393 504 390 Q497 388 495 380 Q489 370 487 358 Z" fill="#e9c8b4"/>
 <!-- head -->
 <ellipse cx="506" cy="273.5" rx="17" ry="22.5" fill="#e9cab7"/>
 <path d="M489.5 268 Q488 250 506 250.5 Q524 251 523 267 Q520 258 506 258.5 Q493 259 489.5 268 Z" fill="#7d695c"/>
 <path d="M500 286 Q507 284 513 286 Q507 291 500 286 Z" fill="#d9735c"/>
 <path d="M495 272 Q498.5 270 502 272 M510 272 Q513.5 270 517 272" stroke="#5a4a42" stroke-width="1.5" fill="none"/><path d="M494 268 L502 267 M510 267 L518 268" stroke="#8a7060" stroke-width="1.2"/>
 <!-- feet -->
 <path d="M492 410.6 L506 412 L508.7 417.6 Q506 426 503 433 Q499 441 496 445.5 Q486 446 475 442.7 Q478 434 485 425 Q490 418 492 410.6 Z" fill="#e0b9a2"/>
 <path d="M511.5 421.7 L525.5 421.7 Q528 430 534 440 Q524 443 510 440 Q511 430 511.5 421.7 Z" fill="#dcb59e"/>
 <path d="M495 413 Q504 415 506 420 Q500 428 490 421 Z" fill="#ebcdb9" opacity="0.6"/>
</g>
<!-- cursor -->
<path d="M345 360 L345 371 L348 368 L352 368 Z" fill="#111"/>
<path d="M354 366 L354 374 M350 370 L358 370" stroke="#222" stroke-width="1"/>
</svg>
<div style="position:absolute;left:847.00px;top:64.20px;height:12.6px;line-height:12.6px;font-size:9px;color:#f0f0f0;font-weight:bold;font-style:normal;white-space:pre;transform:scaleX(0.9149);transform-origin:0 0;">Color</div>
<div style="position:absolute;left:882.00px;top:64.20px;height:12.6px;line-height:12.6px;font-size:9px;color:#a8a8a8;font-weight:bold;font-style:normal;white-space:pre;transform:scaleX(0.8909);transform-origin:0 0;">Swatches</div>
<div style="position:absolute;left:934.00px;top:64.20px;height:12.6px;line-height:12.6px;font-size:9px;color:#a8a8a8;font-weight:bold;font-style:normal;white-space:pre;transform:scaleX(0.9044);transform-origin:0 0;">Gradients</div>
<div style="position:absolute;left:987.00px;top:64.20px;height:12.6px;line-height:12.6px;font-size:9px;color:#a8a8a8;font-weight:bold;font-style:normal;white-space:pre;transform:scaleX(0.9163);transform-origin:0 0;">Patterns</div>
<div style="position:absolute;left:847.00px;top:357.70px;height:12.6px;line-height:12.6px;font-size:9px;color:#f0f0f0;font-weight:bold;font-style:normal;white-space:pre;transform:scaleX(0.9207);transform-origin:0 0;">Properties</div>
<div style="position:absolute;left:903.00px;top:357.70px;height:12.6px;line-height:12.6px;font-size:9px;color:#a8a8a8;font-weight:bold;font-style:normal;white-space:pre;transform:scaleX(0.8988);transform-origin:0 0;">Adjustments</div>
<div style="position:absolute;left:968.00px;top:357.70px;height:12.6px;line-height:12.6px;font-size:9px;color:#a8a8a8;font-weight:bold;font-style:normal;white-space:pre;transform:scaleX(0.8940);transform-origin:0 0;">Libraries</div>
<div style="position:absolute;left:847.00px;top:384.70px;height:12.6px;line-height:12.6px;font-size:9px;color:#f0f0f0;font-weight:bold;font-style:normal;white-space:pre;transform:scaleX(0.8784);transform-origin:0 0;">Layers</div>
<div style="position:absolute;left:887.00px;top:384.70px;height:12.6px;line-height:12.6px;font-size:9px;color:#a8a8a8;font-weight:bold;font-style:normal;white-space:pre;transform:scaleX(0.8762);transform-origin:0 0;">Channels</div>
<div style="position:absolute;left:937.00px;top:384.70px;height:12.6px;line-height:12.6px;font-size:9px;color:#a8a8a8;font-weight:bold;font-style:normal;white-space:pre;transform:scaleX(0.8974);transform-origin:0 0;">Paths</div>
<div style="position:absolute;left:860.00px;top:413.05px;height:11.9px;line-height:11.9px;font-size:8.5px;color:#7a7a7a;font-weight:normal;font-style:normal;white-space:pre;">Kind</div>
<div style="position:absolute;left:848.00px;top:436.55px;height:11.9px;line-height:11.9px;font-size:8.5px;color:#7c7c7c;font-weight:normal;font-style:normal;white-space:pre;transform:scaleX(1.0217);transform-origin:0 0;">Normal</div>
<div style="position:absolute;left:956.00px;top:437.05px;height:11.9px;line-height:11.9px;font-size:8.5px;color:#7c7c7c;font-weight:normal;font-style:normal;white-space:pre;transform:scaleX(1.0581);transform-origin:0 0;">Opacity:</div>
<div style="position:absolute;left:995.00px;top:436.55px;height:11.9px;line-height:11.9px;font-size:8.5px;color:#727272;font-weight:normal;font-style:normal;white-space:pre;transform:scaleX(1.0115);transform-origin:0 0;">100%</div>
<div style="position:absolute;left:844.00px;top:460.55px;height:11.9px;line-height:11.9px;font-size:8.5px;color:#7c7c7c;font-weight:normal;font-style:normal;white-space:pre;transform:scaleX(1.0822);transform-origin:0 0;">Lock:</div>
<div style="position:absolute;left:976.00px;top:460.55px;height:11.9px;line-height:11.9px;font-size:8.5px;color:#7c7c7c;font-weight:normal;font-style:normal;white-space:pre;transform:scaleX(0.8312);transform-origin:0 0;">Fill:</div>
<div style="position:absolute;left:995.00px;top:460.55px;height:11.9px;line-height:11.9px;font-size:8.5px;color:#727272;font-weight:normal;font-style:normal;white-space:pre;transform:scaleX(1.0115);transform-origin:0 0;">100%</div>
<div style="position:absolute;left:903.00px;top:485.85px;height:13.3px;line-height:13.3px;font-size:9.5px;color:#efefef;font-weight:normal;font-style:italic;white-space:pre;transform:scaleX(0.8875);transform-origin:0 0;">Background</div>
<div style="position:absolute;left:931.00px;top:554.30px;height:15.4px;line-height:15.4px;font-size:11px;color:#8e8e8e;font-weight:normal;font-style:italic;white-space:pre;font-family:'Liberation Serif',serif;">fx</div>
<svg style="left:0;top:0" width="1080" height="50" viewBox="0 0 1080 50"><rect x="0" y="21" width="25" height="27" fill="#4b4b4b"/><rect x="3" y="21" width="1" height="27" fill="#444"/><path d="M16.5 35.5 L23 29 L29.5 35.5 L27 35.5 L27 41 L19 41 L19 35.5 Z" fill="#e6e6e6"/><g fill="#c8c8c8"><rect x="248.5" y="31" width="7" height="3"/><rect x="247" y="36" width="10" height="3.2"/><rect x="251.6" y="26" width="0.9" height="16" opacity="0.5"/></g><g fill="#c8c8c8"><rect x="269" y="30.5" width="7" height="3"/><rect x="268" y="36" width="9" height="3.2"/><rect x="278" y="26" width="1" height="16" opacity="0.6"/></g><g fill="#c8c8c8"><rect x="296" y="30.5" width="13" height="1.2"/><rect x="296" y="39.3" width="13" height="1.2"/><rect x="298.5" y="33.5" width="8" height="3.5"/></g><rect x="321" y="23" width="1.2" height="23" fill="#474747"/><g fill="#8c8c8c"><rect x="332" y="29.5" width="12" height="1.2"/><rect x="334" y="31" width="3.2" height="9"/><rect x="339.5" y="32" width="3.5" height="5"/></g><g fill="#8c8c8c"><rect x="355.5" y="30.5" width="3.5" height="10"/><rect x="361" y="33" width="4" height="5"/><rect x="353.5" y="35" width="13" height="0.8" opacity="0.6"/></g><g fill="#8c8c8c"><rect x="376" y="30" width="3.5" height="10"/><rect x="381.5" y="33" width="3.5" height="7"/><rect x="374" y="40.5" width="13" height="1.2"/></g><g fill="#8c8c8c"><rect x="409.5" y="31" width="3.5" height="9.5"/><rect x="406.5" y="28" width="1" height="15"/><rect x="415.5" y="28" width="1" height="15"/></g><rect x="429" y="23" width="1.2" height="23" fill="#474747"/><g fill="#e0e0e0"><circle cx="441.2" cy="35.5" r="1.7"/><circle cx="446.8" cy="35.5" r="1.7"/><circle cx="452.4" cy="35.5" r="1.7"/></g><rect x="466" y="23" width="1.2" height="23" fill="#474747"/><g fill="none" stroke="#8c8c8c" stroke-width="1.2"><path d="M524 36 Q524 30 530 30 Q535 30 535 34 Q538 36 536 39 Q531 41 525 39 Z"/><circle cx="553" cy="35" r="5.5"/><circle cx="553" cy="35" r="2"/><path d="M575 29 L580 35 L575 41 L570 35 Z"/><circle cx="575" cy="35" r="1.5"/><path d="M597 29 L597 41 M591 35 L603 35"/><rect x="612" y="32" width="7" height="6"/><path d="M619 33 L623 30 L623 40 L619 37"/></g><g fill="#8c8c8c"><circle cx="597" cy="35" r="2"/><circle cx="597" cy="29.5" r="1.6"/><circle cx="597" cy="40.5" r="1.6"/><circle cx="591.5" cy="35" r="1.6"/><circle cx="602.5" cy="35" r="1.6"/></g><path d="M820.5 39.5 Q818.5 36 819.5 32 Q821 28 825 28 Q830 28 831 32.5 Q831.5 36 829.5 39.5 Z" fill="#8e8e8e"/><circle cx="825" cy="33" r="3.2" fill="#535353"/><path d="M829.5 38 L829.5 42 M827.5 40 L831.5 40" stroke="#8e8e8e" stroke-width="1.1"/><g fill="none" stroke="#dadada" stroke-width="1.5"><circle cx="1001" cy="34.5" r="4.6"/><path d="M1004.5 38 L1007.5 41"/><rect x="1020.5" y="30.3" width="13" height="10.5"/><path d="M1023.5 31 L1023.5 40"/><path d="M1043.5 34 L1045.5 36 L1047.5 34" stroke="#9a9a9a" stroke-width="1"/><path d="M1061 32 L1058.5 32 L1058.5 41 L1072 41 L1072 32 L1068 32 M1065 38 L1065 28.5 M1062.5 31 L1065 28.5 L1067.5 31"/></g><g fill="none" stroke="#474747" stroke-width="1"><rect x="993" y="-1" width="22" height="16.5" rx="1"/><rect x="1016" y="-1" width="22" height="16.5" rx="1"/><rect x="1039" y="-1" width="36" height="16.5" rx="1"/></g><g fill="none" stroke="#cfcfcf" stroke-width="1.4"><path d="M998.5 10.6 L1006.5 10.6" stroke-width="2"/><rect x="1021.5" y="6.5" width="6" height="5"/><path d="M1024 6.5 L1024 4.5 L1030.5 4.5 L1030.5 9.5 L1027.5 9.5"/><path d="M1054 4.5 L1062 12 M1062 4.5 L1054 12"/></g></svg>
<div style="position:absolute;left:471.70px;top:29.20px;height:12.6px;line-height:12.6px;font-size:9px;color:#8a8a8a;font-weight:normal;font-style:normal;white-space:pre;transform:scaleX(0.9813);transform-origin:0 0;">3D Mode:</div>
<svg style="left:0;top:0" width="32" height="572" viewBox="0 0 32 572"><rect x="4" y="75" width="22" height="19" fill="#383838"/><g transform="translate(16.5 83.8)"><path d="M0 -6 L0 6 M-6 0 L6 0" stroke="#e8e8e8" stroke-width="1.8"/><path d="M0 -7.5 L-2.5 -4.5 L2.5 -4.5Z M0 7.5 L-2.5 4.5 L2.5 4.5Z M-7.5 0 L-4.5 -2.5 L-4.5 2.5Z M7.5 0 L4.5 -2.5 L4.5 2.5Z" fill="#e8e8e8"/></g><g transform="translate(16.5 105.8)"><rect x="-6.5" y="-5" width="13" height="10" fill="#5a5a5a" stroke="#d4d4d4" stroke-width="1.3" stroke-dasharray="2.2 1.3"/></g><g transform="translate(16.5 127.8)"><ellipse cx="0.5" cy="-2" rx="6" ry="4" fill="none" stroke="#d4d4d4" stroke-width="1.5" transform="rotate(-15)"/><path d="M-3 1 Q-4 4 -2.5 6" stroke="#d4d4d4" stroke-width="1.5" fill="none"/></g><g transform="translate(16.5 149.8)"><ellipse cx="-3" cy="1" rx="4" ry="5" stroke="#d4d4d4" stroke-width="1.3" stroke-dasharray="1.6 1" fill="none"/><path d="M8 -7 L0 2 L-1.5 5.5 L2.5 4 L9 -5 Z" fill="#d4d4d4"/></g><g transform="translate(16.5 171.8)"><path d="M-4 -8 L-4 4 L8 4 M-8 -4 L4 -4 L4 8" stroke="#d4d4d4" stroke-width="1.7" fill="none"/></g><g transform="translate(16.5 193.8)"><rect x="-6.5" y="-5.5" width="13" height="11" fill="none" stroke="#d4d4d4" stroke-width="1.4"/><path d="M-6 -5 L6 5 M6 -5 L-6 5" stroke="#d4d4d4" stroke-width="1.2"/></g><g transform="translate(16.5 215.8)"><path d="M-6 7 L-7 6 L2 -3 L4 -1 L-5 8 Z" fill="none" stroke="#d4d4d4" stroke-width="1.3"/><path d="M1 -4 L5 -8 Q8 -8 8 -5 L4 -1 Z" fill="#d4d4d4"/></g><g transform="translate(16.5 237.8)"><rect x="-3" y="-8" width="6" height="16" rx="2.5" fill="#d4d4d4" transform="rotate(45)"/><rect x="-1.5" y="-2" width="3" height="4" fill="#555" transform="rotate(45)"/></g><g transform="translate(16.5 259.8)"><path d="M7 -8 L-1 2 L1 4 L8 -7 Z" fill="#d4d4d4"/><path d="M-2 2 Q-6 3 -6 8 Q-1 8 1 4 Z" fill="#d4d4d4"/><circle cx="-5" cy="-5" r="2" fill="#d4d4d4"/></g><g transform="translate(16.5 281.8)"><circle cx="0" cy="-4.5" r="3" fill="#d4d4d4"/><rect x="-1.2" y="-2" width="2.4" height="4" fill="#d4d4d4"/><rect x="-6" y="2" width="12" height="3" fill="#d4d4d4"/><rect x="-6" y="6" width="12" height="1.3" fill="#d4d4d4"/></g><g transform="translate(16.5 303.8)"><path d="M7 -8 L-1 2 L1 4 L8 -7 Z" fill="#d4d4d4"/><path d="M-2 2 Q-6 3 -6 8 Q-1 8 1 4 Z" fill="#d4d4d4"/><path d="M-7 -2 L-3 -5 L-2 -2 Z" fill="#d4d4d4"/></g><g transform="translate(16.5 325.8)"><path d="M-6 3 L2 -6 L7 -2 L-1 7 L-4 7 Z" fill="none" stroke="#d4d4d4" stroke-width="1.4"/><path d="M2 -6 L7 -2 L3 2 L-2 -2 Z" fill="#d4d4d4"/><path d="M0 7 L8 7" stroke="#d4d4d4" stroke-width="1.2"/></g><defs><linearGradient id="tbg" x1="0" x2="1"><stop offset="0" stop-color="#2a2a2a"/><stop offset="1" stop-color="#bdbdbd"/></linearGradient></defs><g transform="translate(16.5 347.8)"><rect x="-6.5" y="-5" width="13" height="10" fill="url(#tbg)" stroke="#d4d4d4" stroke-width="1.3"/></g><g transform="translate(16.5 369.8)"><path d="M0 -8 Q6 0 6 3 Q6 8 0 8 Q-6 8 -6 3 Q-6 0 0 -8 Z" fill="#d4d4d4"/></g><g transform="translate(16.5 391.8)"><circle cx="2" cy="-2" r="4.8" fill="#d4d4d4"/><path d="M-1 2 L-7 8" stroke="#d4d4d4" stroke-width="1.8"/></g><g transform="translate(16.5 413.8)"><path d="M-7 7 L-4 0 L3 -6 L7 -2 L1 5 Z" fill="none" stroke="#d4d4d4" stroke-width="1.4"/><circle cx="-1" cy="2" r="1" fill="#d4d4d4"/></g><g transform="translate(16.5 435.8)"><path d="M-6 -6 L6 -6 M0 -6 L0 7 M-3 7 L3 7" stroke="#d4d4d4" stroke-width="1.8" fill="none"/><path d="M-6 -6 L-6 -3 M6 -6 L6 -3" stroke="#d4d4d4" stroke-width="1.4"/></g><g transform="translate(16.5 457.8)"><path d="M-5 -7 L6 2 L1 2 L4 8 L2 8 L-1 3 L-5 6 Z" fill="#111" stroke="#d4d4d4" stroke-width="1.1"/></g><g transform="translate(16.5 479.8)"><rect x="-6.5" y="-5" width="13" height="10" fill="#777" stroke="#d4d4d4" stroke-width="1.4"/></g><g transform="translate(16.5 501.8)"><path d="M-6 1 Q-7 -1 -5 -1 L-3 1 L-3 -6 Q-2 -7 -1 -6 L-1 -1 L-1 -8 Q0 -9 1 -8 L1 -1 L1 -7 Q2 -8 3 -7 L3 -1 L3 -5 Q4 -6 5 -5 L5 3 Q4 8 -1 8 Q-4 7 -6 1 Z" fill="#d4d4d4"/></g><g transform="translate(16.5 523.8)"><circle cx="-2" cy="-1.5" r="5" fill="none" stroke="#d4d4d4" stroke-width="1.6"/><path d="M1.5 2 L6 7" stroke="#d4d4d4" stroke-width="2"/></g><g transform="translate(16.5 545.8)"><circle cx="-5" cy="0" r="1.5" fill="#d4d4d4"/><circle cx="0" cy="0" r="1.5" fill="#d4d4d4"/><circle cx="5" cy="0" r="1.5" fill="#d4d4d4"/><path d="M9 6 L9 8 L7 8 Z" fill="#888"/></g><rect x="8" y="564" width="6" height="6" fill="#f0f0f0" stroke="#333" stroke-width="0.8"/><rect x="4.5" y="560.5" width="6" height="6" fill="#000" stroke="#e0e0e0" stroke-width="0.8"/><path d="M20 563 L24 563 L24 569 M22.5 567 L24 569.5 L25.5 567 M20 563 L21.5 561.5 M20 563 L21.5 564.5" stroke="#d4d4d4" stroke-width="1.1" fill="none"/></svg>
<div style="position:absolute;left:26.5px;top:3.5px;width:23px;height:14px;background:#3d3d3d;border-radius:1px;"></div>
<div style="position:absolute;left:29.50px;top:3.90px;height:14.0px;line-height:14.0px;font-size:10px;color:#e6e6e6;font-weight:normal;font-style:normal;white-space:pre;transform:scaleX(0.9612);transform-origin:0 0;-webkit-text-stroke:0.2px #e6e6e6;">File</div>
<div style="position:absolute;left:55.00px;top:3.90px;height:14.0px;line-height:14.0px;font-size:10px;color:#e6e6e6;font-weight:normal;font-style:normal;white-space:pre;-webkit-text-stroke:0.2px #e6e6e6;">Edit</div>
<div style="position:absolute;left:82.50px;top:3.90px;height:14.0px;line-height:14.0px;font-size:10px;color:#e6e6e6;font-weight:normal;font-style:normal;white-space:pre;transform:scaleX(0.9893);transform-origin:0 0;-webkit-text-stroke:0.2px #e6e6e6;">Image</div>
<div style="position:absolute;left:120.00px;top:3.90px;height:14.0px;line-height:14.0px;font-size:10px;color:#e6e6e6;font-weight:normal;font-style:normal;white-space:pre;transform:scaleX(0.9434);transform-origin:0 0;-webkit-text-stroke:0.2px #e6e6e6;">Layer</div>
<div style="position:absolute;left:154.80px;top:3.90px;height:14.0px;line-height:14.0px;font-size:10px;color:#e6e6e6;font-weight:normal;font-style:normal;white-space:pre;transform:scaleX(0.9176);transform-origin:0 0;-webkit-text-stroke:0.2px #e6e6e6;">Type</div>
<div style="position:absolute;left:185.30px;top:3.90px;height:14.0px;line-height:14.0px;font-size:10px;color:#e6e6e6;font-weight:normal;font-style:normal;white-space:pre;transform:scaleX(0.9174);transform-origin:0 0;-webkit-text-stroke:0.2px #e6e6e6;">Select</div>
<div style="position:absolute;left:221.00px;top:3.90px;height:14.0px;line-height:14.0px;font-size:10px;color:#e6e6e6;font-weight:normal;font-style:normal;white-space:pre;transform:scaleX(0.9895);transform-origin:0 0;-webkit-text-stroke:0.2px #e6e6e6;">Filter</div>
<div style="position:absolute;left:253.00px;top:3.90px;height:14.0px;line-height:14.0px;font-size:10px;color:#e6e6e6;font-weight:normal;font-style:normal;white-space:pre;transform:scaleX(1.0159);transform-origin:0 0;-webkit-text-stroke:0.2px #e6e6e6;">3D</div>
<div style="position:absolute;left:276.00px;top:3.90px;height:14.0px;line-height:14.0px;font-size:10px;color:#e6e6e6;font-weight:normal;font-style:normal;white-space:pre;transform:scaleX(1.0233);transform-origin:0 0;-webkit-text-stroke:0.2px #e6e6e6;">View</div>
<div style="position:absolute;left:307.00px;top:3.90px;height:14.0px;line-height:14.0px;font-size:10px;color:#e6e6e6;font-weight:normal;font-style:normal;white-space:pre;transform:scaleX(1.0057);transform-origin:0 0;-webkit-text-stroke:0.2px #e6e6e6;">Plugins</div>
<div style="position:absolute;left:349.00px;top:3.90px;height:14.0px;line-height:14.0px;font-size:10px;color:#e6e6e6;font-weight:normal;font-style:normal;white-space:pre;transform:scaleX(1.0681);transform-origin:0 0;-webkit-text-stroke:0.2px #e6e6e6;">Window</div>
<div style="position:absolute;left:397.00px;top:3.90px;height:14.0px;line-height:14.0px;font-size:10px;color:#e6e6e6;font-weight:normal;font-style:normal;white-space:pre;transform:scaleX(1.0205);transform-origin:0 0;-webkit-text-stroke:0.2px #e6e6e6;">Help</div>
<div style="position:absolute;left:5px;top:4px;width:12px;height:12px;background:#001e36;border-radius:2px;"></div>
<div style="position:absolute;left:6.30px;top:5.30px;height:9.8px;line-height:9.8px;font-size:7px;color:#31a8ff;font-weight:bold;font-style:normal;white-space:pre;transform:scaleX(1.1095);transform-origin:0 0;">Ps</div>
<div style="position:absolute;left:25px;top:16.5px;width:211px;height:503px;background:#f0f0f0;box-shadow:1px 1px 3px rgba(0,0,0,0.45);"></div>
<div style="position:absolute;left:232.5px;top:16.5px;width:3px;height:503px;background:#f7f7f7;"></div>
<div style="position:absolute;left:26.3px;top:33.8px;width:208.5px;height:16.3px;background:#1470dc;"></div>
<div style="position:absolute;left:41.00px;top:19.74px;height:14.42px;line-height:14.42px;font-size:10.3px;color:#1e1e1e;font-weight:normal;font-style:normal;white-space:pre;transform:scaleX(0.9500);transform-origin:0 0;-webkit-text-stroke:0.15px #1e1e1e;">New...</div>
<div style="position:absolute;left:191.24px;top:19.74px;height:14.42px;line-height:14.42px;font-size:10.3px;color:#1e1e1e;font-weight:normal;font-style:normal;white-space:pre;transform:scaleX(1.0100);transform-origin:0 0;-webkit-text-stroke:0.15px #1e1e1e;">Ctrl+N</div>
<div style="position:absolute;left:41.00px;top:35.39px;height:14.42px;line-height:14.42px;font-size:10.3px;color:#ffffff;font-weight:normal;font-style:normal;white-space:pre;transform:scaleX(0.9500);transform-origin:0 0;-webkit-text-stroke:0.15px #ffffff;">Open...</div>
<div style="position:absolute;left:190.65px;top:35.39px;height:14.42px;line-height:14.42px;font-size:10.3px;color:#ffffff;font-weight:normal;font-style:normal;white-space:pre;transform:scaleX(1.0100);transform-origin:0 0;-webkit-text-stroke:0.15px #ffffff;">Ctrl+O</div>
<div style="position:absolute;left:41.00px;top:52.09px;height:14.42px;line-height:14.42px;font-size:10.3px;color:#1e1e1e;font-weight:normal;font-style:normal;white-space:pre;transform:scaleX(0.9500);transform-origin:0 0;-webkit-text-stroke:0.15px #1e1e1e;">Browse in Bridge...</div>
<div style="position:absolute;left:172.44px;top:52.09px;height:14.42px;line-height:14.42px;font-size:10.3px;color:#1e1e1e;font-weight:normal;font-style:normal;white-space:pre;transform:scaleX(1.0100);transform-origin:0 0;-webkit-text-stroke:0.15px #1e1e1e;">Alt+Ctrl+O</div>
<div style="position:absolute;left:41.00px;top:67.49px;height:14.42px;line-height:14.42px;font-size:10.3px;color:#1e1e1e;font-weight:normal;font-style:normal;white-space:pre;transform:scaleX(0.9500);transform-origin:0 0;-webkit-text-stroke:0.15px #1e1e1e;">Open As...</div>
<div style="position:absolute;left:145.57px;top:67.49px;height:14.42px;line-height:14.42px;font-size:10.3px;color:#1e1e1e;font-weight:normal;font-style:normal;white-space:pre;transform:scaleX(1.0100);transform-origin:0 0;-webkit-text-stroke:0.15px #1e1e1e;">Alt+Shift+Ctrl+O</div>
<div style="position:absolute;left:41.00px;top:83.24px;height:14.42px;line-height:14.42px;font-size:10.3px;color:#1e1e1e;font-weight:normal;font-style:normal;white-space:pre;transform:scaleX(0.9500);transform-origin:0 0;-webkit-text-stroke:0.15px #1e1e1e;">Open as Smart Object...</div>
<div style="position:absolute;left:41.00px;top:99.09px;height:14.42px;line-height:14.42px;font-size:10.3px;color:#1e1e1e;font-weight:normal;font-style:normal;white-space:pre;transform:scaleX(0.9500);transform-origin:0 0;-webkit-text-stroke:0.15px #1e1e1e;">Open Recent</div>
<div style="position:absolute;left:225.5px;top:101.10px;width:0;height:0;border-top:4.5px solid transparent;border-bottom:4.5px solid transparent;border-left:5px solid #111;"></div>
<div style="position:absolute;left:41.00px;top:121.24px;height:14.42px;line-height:14.42px;font-size:10.3px;color:#1e1e1e;font-weight:normal;font-style:normal;white-space:pre;transform:scaleX(0.9500);transform-origin:0 0;-webkit-text-stroke:0.15px #1e1e1e;">Close</div>
<div style="position:absolute;left:188.93px;top:121.24px;height:14.42px;line-height:14.42px;font-size:10.3px;color:#1e1e1e;font-weight:normal;font-style:normal;white-space:pre;transform:scaleX(1.0100);transform-origin:0 0;-webkit-text-stroke:0.15px #1e1e1e;">Ctrl+W</div>
<div style="position:absolute;left:41.00px;top:135.99px;height:14.42px;line-height:14.42px;font-size:10.3px;color:#1e1e1e;font-weight:normal;font-style:normal;white-space:pre;transform:scaleX(0.9500);transform-origin:0 0;-webkit-text-stroke:0.15px #1e1e1e;">Close All</div>
<div style="position:absolute;left:170.72px;top:135.99px;height:14.42px;line-height:14.42px;font-size:10.3px;color:#1e1e1e;font-weight:normal;font-style:normal;white-space:pre;transform:scaleX(1.0100);transform-origin:0 0;-webkit-text-stroke:0.15px #1e1e1e;">Alt+Ctrl+W</div>
<div style="position:absolute;left:41.00px;top:151.59px;height:14.42px;line-height:14.42px;font-size:10.3px;color:#9a9a9a;font-weight:normal;font-style:normal;white-space:pre;transform:scaleX(0.9500);transform-origin:0 0;-webkit-text-stroke:0.15px #9a9a9a;">Close Others</div>
<div style="position:absolute;left:173.59px;top:151.59px;height:14.42px;line-height:14.42px;font-size:10.3px;color:#9a9a9a;font-weight:normal;font-style:normal;white-space:pre;transform:scaleX(1.0100);transform-origin:0 0;-webkit-text-stroke:0.15px #9a9a9a;">Alt+Ctrl+P</div>
<div style="position:absolute;left:41.00px;top:168.09px;height:14.42px;line-height:14.42px;font-size:10.3px;color:#1e1e1e;font-weight:normal;font-style:normal;white-space:pre;transform:scaleX(0.9500);transform-origin:0 0;-webkit-text-stroke:0.15px #1e1e1e;">Close and Go to Bridge...</div>
<div style="position:absolute;left:162.04px;top:168.09px;height:14.42px;line-height:14.42px;font-size:10.3px;color:#1e1e1e;font-weight:normal;font-style:normal;white-space:pre;transform:scaleX(1.0100);transform-origin:0 0;-webkit-text-stroke:0.15px #1e1e1e;">Shift+Ctrl+W</div>
<div style="position:absolute;left:41.00px;top:183.49px;height:14.42px;line-height:14.42px;font-size:10.3px;color:#9a9a9a;font-weight:normal;font-style:normal;white-space:pre;transform:scaleX(0.9500);transform-origin:0 0;-webkit-text-stroke:0.15px #9a9a9a;">Save</div>
<div style="position:absolute;left:191.80px;top:183.49px;height:14.42px;line-height:14.42px;font-size:10.3px;color:#9a9a9a;font-weight:normal;font-style:normal;white-space:pre;transform:scaleX(1.0100);transform-origin:0 0;-webkit-text-stroke:0.15px #9a9a9a;">Ctrl+S</div>
<div style="position:absolute;left:41.00px;top:199.09px;height:14.42px;line-height:14.42px;font-size:10.3px;color:#1e1e1e;font-weight:normal;font-style:normal;white-space:pre;transform:scaleX(0.9500);transform-origin:0 0;-webkit-text-stroke:0.15px #1e1e1e;">Save As...</div>
<div style="position:absolute;left:164.93px;top:199.09px;height:14.42px;line-height:14.42px;font-size:10.3px;color:#1e1e1e;font-weight:normal;font-style:normal;white-space:pre;transform:scaleX(1.0100);transform-origin:0 0;-webkit-text-stroke:0.15px #1e1e1e;">Shift+Ctrl+S</div>
<div style="position:absolute;left:41.00px;top:215.09px;height:14.42px;line-height:14.42px;font-size:10.3px;color:#1e1e1e;font-weight:normal;font-style:normal;white-space:pre;transform:scaleX(0.9500);transform-origin:0 0;-webkit-text-stroke:0.15px #1e1e1e;">Save a Copy...</div>
<div style="position:absolute;left:173.59px;top:215.09px;height:14.42px;line-height:14.42px;font-size:10.3px;color:#1e1e1e;font-weight:normal;font-style:normal;white-space:pre;transform:scaleX(1.0100);transform-origin:0 0;-webkit-text-stroke:0.15px #1e1e1e;">Alt+Ctrl+S</div>
<div style="position:absolute;left:41.00px;top:230.59px;height:14.42px;line-height:14.42px;font-size:10.3px;color:#9a9a9a;font-weight:normal;font-style:normal;white-space:pre;transform:scaleX(0.9500);transform-origin:0 0;-webkit-text-stroke:0.15px #9a9a9a;">Revert</div>
<div style="position:absolute;left:203.07px;top:230.59px;height:14.42px;line-height:14.42px;font-size:10.3px;color:#9a9a9a;font-weight:normal;font-style:normal;white-space:pre;transform:scaleX(1.0100);transform-origin:0 0;-webkit-text-stroke:0.15px #9a9a9a;">F12</div>
<div style="position:absolute;left:41.00px;top:252.59px;height:14.42px;line-height:14.42px;font-size:10.3px;color:#1e1e1e;font-weight:normal;font-style:normal;white-space:pre;transform:scaleX(0.9500);transform-origin:0 0;-webkit-text-stroke:0.15px #1e1e1e;">Export</div>
<div style="position:absolute;left:225.5px;top:254.60px;width:0;height:0;border-top:4.5px solid transparent;border-bottom:4.5px solid transparent;border-left:5px solid #111;"></div>
<div style="position:absolute;left:41.00px;top:268.59px;height:14.42px;line-height:14.42px;font-size:10.3px;color:#1e1e1e;font-weight:normal;font-style:normal;white-space:pre;transform:scaleX(0.9500);transform-origin:0 0;-webkit-text-stroke:0.15px #1e1e1e;">Generate</div>
<div style="position:absolute;left:225.5px;top:270.60px;width:0;height:0;border-top:4.5px solid transparent;border-bottom:4.5px solid transparent;border-left:5px solid #111;"></div>
<div style="position:absolute;left:41.00px;top:284.59px;height:14.42px;line-height:14.42px;font-size:10.3px;color:#1e1e1e;font-weight:normal;font-style:normal;white-space:pre;transform:scaleX(0.9500);transform-origin:0 0;-webkit-text-stroke:0.15px #1e1e1e;">Share...</div>
<div style="position:absolute;left:41.00px;top:306.49px;height:14.42px;line-height:14.42px;font-size:10.3px;color:#1e1e1e;font-weight:normal;font-style:normal;white-space:pre;transform:scaleX(0.9500);transform-origin:0 0;-webkit-text-stroke:0.15px #1e1e1e;">Search Adobe Stock...</div>
<div style="position:absolute;left:41.00px;top:321.89px;height:14.42px;line-height:14.42px;font-size:10.3px;color:#1e1e1e;font-weight:normal;font-style:normal;white-space:pre;transform:scaleX(0.9500);transform-origin:0 0;-webkit-text-stroke:0.15px #1e1e1e;">Place Embedded...</div>
<div style="position:absolute;left:41.00px;top:337.49px;height:14.42px;line-height:14.42px;font-size:10.3px;color:#1e1e1e;font-weight:normal;font-style:normal;white-space:pre;transform:scaleX(0.9500);transform-origin:0 0;-webkit-text-stroke:0.15px #1e1e1e;">Place Linked...</div>
<div style="position:absolute;left:41.00px;top:353.74px;height:14.42px;line-height:14.42px;font-size:10.3px;color:#9a9a9a;font-weight:normal;font-style:normal;white-space:pre;transform:scaleX(0.9500);transform-origin:0 0;-webkit-text-stroke:0.15px #9a9a9a;">Package...</div>
<div style="position:absolute;left:41.00px;top:375.59px;height:14.42px;line-height:14.42px;font-size:10.3px;color:#1e1e1e;font-weight:normal;font-style:normal;white-space:pre;transform:scaleX(0.9500);transform-origin:0 0;-webkit-text-stroke:0.15px #1e1e1e;">Automate</div>
<div style="position:absolute;left:225.5px;top:377.60px;width:0;height:0;border-top:4.5px solid transparent;border-bottom:4.5px solid transparent;border-left:5px solid #111;"></div>
<div style="position:absolute;left:41.00px;top:391.24px;height:14.42px;line-height:14.42px;font-size:10.3px;color:#1e1e1e;font-weight:normal;font-style:normal;white-space:pre;transform:scaleX(0.9500);transform-origin:0 0;-webkit-text-stroke:0.15px #1e1e1e;">Scripts</div>
<div style="position:absolute;left:225.5px;top:393.25px;width:0;height:0;border-top:4.5px solid transparent;border-bottom:4.5px solid transparent;border-left:5px solid #111;"></div>
<div style="position:absolute;left:41.00px;top:406.99px;height:14.42px;line-height:14.42px;font-size:10.3px;color:#1e1e1e;font-weight:normal;font-style:normal;white-space:pre;transform:scaleX(0.9500);transform-origin:0 0;-webkit-text-stroke:0.15px #1e1e1e;">Import</div>
<div style="position:absolute;left:225.5px;top:409.00px;width:0;height:0;border-top:4.5px solid transparent;border-bottom:4.5px solid transparent;border-left:5px solid #111;"></div>
<div style="position:absolute;left:41.00px;top:428.89px;height:14.42px;line-height:14.42px;font-size:10.3px;color:#1e1e1e;font-weight:normal;font-style:normal;white-space:pre;transform:scaleX(0.9500);transform-origin:0 0;-webkit-text-stroke:0.15px #1e1e1e;">File Info...</div>
<div style="position:absolute;left:150.76px;top:428.89px;height:14.42px;line-height:14.42px;font-size:10.3px;color:#1e1e1e;font-weight:normal;font-style:normal;white-space:pre;transform:scaleX(1.0100);transform-origin:0 0;-webkit-text-stroke:0.15px #1e1e1e;">Alt+Shift+Ctrl+I</div>
<div style="position:absolute;left:41.00px;top:445.49px;height:14.42px;line-height:14.42px;font-size:10.3px;color:#9a9a9a;font-weight:normal;font-style:normal;white-space:pre;transform:scaleX(0.9500);transform-origin:0 0;-webkit-text-stroke:0.15px #9a9a9a;">Version History</div>
<div style="position:absolute;left:41.00px;top:467.19px;height:14.42px;line-height:14.42px;font-size:10.3px;color:#1e1e1e;font-weight:normal;font-style:normal;white-space:pre;transform:scaleX(0.9500);transform-origin:0 0;-webkit-text-stroke:0.15px #1e1e1e;">Print...</div>
<div style="position:absolute;left:191.80px;top:467.19px;height:14.42px;line-height:14.42px;font-size:10.3px;color:#1e1e1e;font-weight:normal;font-style:normal;white-space:pre;transform:scaleX(1.0100);transform-origin:0 0;-webkit-text-stroke:0.15px #1e1e1e;">Ctrl+P</div>
<div style="position:absolute;left:41.00px;top:481.99px;height:14.42px;line-height:14.42px;font-size:10.3px;color:#1e1e1e;font-weight:normal;font-style:normal;white-space:pre;transform:scaleX(0.9500);transform-origin:0 0;-webkit-text-stroke:0.15px #1e1e1e;">Print One Copy</div>
<div style="position:absolute;left:146.72px;top:481.99px;height:14.42px;line-height:14.42px;font-size:10.3px;color:#1e1e1e;font-weight:normal;font-style:normal;white-space:pre;transform:scaleX(1.0100);transform-origin:0 0;-webkit-text-stroke:0.15px #1e1e1e;">Alt+Shift+Ctrl+P</div>
<div style="position:absolute;left:41.00px;top:504.09px;height:14.42px;line-height:14.42px;font-size:10.3px;color:#1e1e1e;font-weight:normal;font-style:normal;white-space:pre;transform:scaleX(0.9500);transform-origin:0 0;-webkit-text-stroke:0.15px #1e1e1e;">Exit</div>
<div style="position:absolute;left:190.65px;top:504.09px;height:14.42px;line-height:14.42px;font-size:10.3px;color:#1e1e1e;font-weight:normal;font-style:normal;white-space:pre;transform:scaleX(1.0100);transform-origin:0 0;-webkit-text-stroke:0.15px #1e1e1e;">Ctrl+Q</div>
<div style="position:absolute;left:26.5px;top:114.5px;width:206px;height:2px;background:#d6d6d6;"></div>
<div style="position:absolute;left:26.5px;top:247px;width:206px;height:2px;background:#d6d6d6;"></div>
<div style="position:absolute;left:26.5px;top:300px;width:206px;height:2px;background:#d6d6d6;"></div>
<div style="position:absolute;left:26.5px;top:369.5px;width:206px;height:2px;background:#d6d6d6;"></div>
<div style="position:absolute;left:26.5px;top:423.2px;width:206px;height:2px;background:#d6d6d6;"></div>
<div style="position:absolute;left:26.5px;top:460.8px;width:206px;height:2px;background:#d6d6d6;"></div>
<div style="position:absolute;left:26.5px;top:498.2px;width:206px;height:2px;background:#d6d6d6;"></div>
</body></html>
